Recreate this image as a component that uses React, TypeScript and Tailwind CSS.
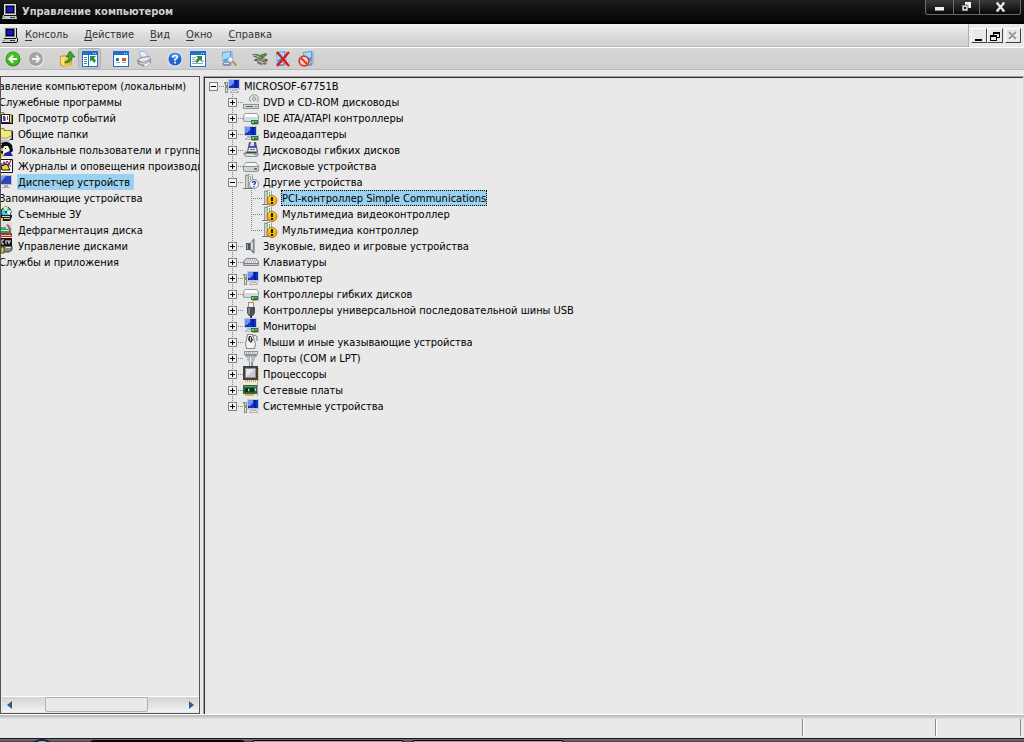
import React, { useState } from 'react';

type IconProps = { children: React.ReactNode; size?: number };

const Svg = ({ children, size = 16 }: IconProps) => (
  <svg width={size} height={size} viewBox="0 0 16 16" className="shrink-0" aria-hidden="true">
    {children}
  </svg>
);

/* ---------- shared drawing parts ---------- */

const Card = () => (
  <>
    <path d="M8 10h7v4H8z" fill="#1d7a41" />
    <path d="M9 11h2v2H9zM12 11h2v1h-2z" fill="#7fd09a" />
    <path d="M9 14h5v1H9z" fill="#d9a520" />
    <path d="M15 9h1v6h-1z" fill="#a7abb0" />
  </>
);

const Tower = () => (
  <>
    <path d="M2 1l4-1 4 1v13H2z" fill="#9a9d94" />
    <path d="M3 2h2v12H3z" fill="#c9ccc3" />
    <path d="M6 1h3v12H6z" fill="#f4f5f1" />
    <path d="M7 2h1v4H7z" fill="#5fc230" />
    <path d="M0 14h10v1H0z" fill="#777a72" />
  </>
);

/* ---------- tree icons ---------- */

const PcIcon = () => (
  <Svg>
    <path d="M4 1h12v11H4z" fill="#c6c9d4" />
    <path d="M5 2h10v8H5z" fill="#1230c4" />
    <path d="M5 2h5v3L7 8H5z" fill="#6a94f4" />
    <path d="M11 2h2v8h-2z" fill="#0a1b9a" />
    <path d="M8 12h5v1h2v2H6v-2h2z" fill="#b3b6bc" />
    <path d="M8 13h5v1H8z" fill="#e4e5e8" />
    <path d="M0 4h4v11H1v-9H0z" fill="#8b9087" />
    <path d="M2 5h1v9H2z" fill="#dfe2dc" />
    <path d="M2 7h1v3H2z" fill="#3fc41e" />
  </Svg>
);

const MonitorIcon = () => (
  <Svg>
    <path d="M1 0h13v10H1z" fill="#c6c9d4" />
    <path d="M2 1h11v8H2z" fill="#1230c4" />
    <path d="M2 1h5v3L4 7H2z" fill="#6a94f4" />
    <path d="M9 1h2v8H9z" fill="#0a1b9a" />
    <path d="M4 10h5v2h1v2H2v-2h2z" fill="#b3b6bc" />
    <path d="M4 12h5v1H4z" fill="#e4e5e8" />
    <Card />
  </Svg>
);

const ManagerIcon = () => (
  <Svg>
    <path d="M1 1h13v10H1z" fill="#b9bcc6" />
    <path d="M2 2h11v8H2z" fill="#2a44ba" />
    <path d="M2 2h6L2 9z" fill="#7f9ceb" />
    <path d="M6 11h4v2h2v1H4v-1h2z" fill="#a6a8ad" />
  </Svg>
);

const DvdIcon = () => (
  <Svg>
    <circle cx="11" cy="5" r="4.500" fill="#dfe5e6" stroke="#8f9594" />
    <path d="M11 5L8 1a5 5 0 015 0z" fill="#a9dca0" />
    <path d="M11 5l4 2a5 5 0 00.5-3z" fill="#b9c6ee" />
    <circle cx="11" cy="5" r="1.500" fill="#f7f7f7" stroke="#8d9496" />
    <path d="M2 8h12l2 3H0z" fill="#e3e4e4" />
    <path d="M0 10h16v5H0z" fill="#919396" />
    <path d="M1 11h14v3H1z" fill="#d3d5d6" />
    <path d="M3 12h7v1H3z" fill="#5a5c5f" />
    <path d="M12 12h2v1h-2z" fill="#50b83a" />
  </Svg>
);

const IdeIcon = () => (
  <Svg>
    <path d="M2 3h12l2 3v5l-2 1H2l-2-1V6z" fill="#9b9da1" />
    <path d="M2 4h12l1 3H1z" fill="#fbfbfb" />
    <path d="M1 7h14v3l-1 1H2l-1-1z" fill="#d9dade" />
    <Card />
  </Svg>
);

const DiskIcon = () => (
  <Svg>
    <path d="M3 4h10l3 4v5l-2 1H2l-2-1V8z" fill="#919498" />
    <path d="M3 5h10l2 3H1z" fill="#f6f6f7" />
    <path d="M1 9h14v3l-1 1H2l-1-1z" fill="#d2d4d6" />
    <path d="M11 10h3v2h-3z" fill="#35a52c" />
  </Svg>
);

const FloppyIcon = () => (
  <Svg>
    <path d="M6 0h7l2 10H4z" fill="#4d5598" />
    <path d="M8 0h3v4H7z" fill="#dadff0" />
    <path d="M6 6h7l1 4H5z" fill="#eceef5" />
    <path d="M7 7h5v1H7z" fill="#5c63a8" />
    <path d="M3 9h11l2 3-2 3H3l-3-3z" fill="#8e9195" />
    <path d="M4 10h9l1 1H3z" fill="#3f4246" />
    <path d="M2 12h12l-1 2H3z" fill="#dcdee0" />
    <path d="M11 12h2v1h-2z" fill="#50b83a" />
  </Svg>
);

const OtherIcon = () => (
  <Svg>
    <Tower />
    <circle cx="11" cy="10" r="4.500" fill="#f4f7fc" stroke="#7f8ba0" />
    <path d="M9.500 9q0-1.500 1.500-1.500t1.500 1.300Q12.500 9.700 11 10.600V11" fill="none" stroke="#1d45b5" strokeWidth="1.300" />
    <path d="M10.300 12h1.400v1.200h-1.400z" fill="#1d45b5" />
  </Svg>
);

const WarningIcon = () => (
  <Svg>
    <Tower />
    <circle cx="10" cy="10.500" r="5" fill="#f2b40c" stroke="#946806" strokeWidth=".8" />
    <path d="M6.500 9q1-2.500 3.500-2.500T13.500 9" fill="none" stroke="#fbdc77" />
    <path d="M9 7h2v4H9zM9 12h2v2H9z" fill="#1c1503" />
  </Svg>
);

const SpeakerIcon = () => (
  <Svg>
    <path d="M3 5h4v7H3z" fill="#4d555d" />
    <path d="M4 6h1v5H4z" fill="#a1a8af" />
    <path d="M7 5l4-5v16l-4-4z" fill="#7c838b" />
    <path d="M8 5l2-2v10l-2-2z" fill="#dadee2" />
    <path d="M11 1h1v14h-1z" fill="#a5abb1" />
  </Svg>
);

const KeyboardIcon = () => (
  <Svg>
    <path d="M3 4h10l3 4v3l-1 1H1l-1-1V8z" fill="#7e818c" />
    <path d="M3 5h10l2 4H1z" fill="#eceef2" />
    <path d="M3 6h11M2 8h12" stroke="#8e93a3" strokeDasharray="1 1" />
    <path d="M4 7h11" stroke="#a8acb9" strokeDasharray="1 1" />
    <path d="M1 10h14v1H1z" fill="#c9cbd2" />
  </Svg>
);

const UsbIcon = () => (
  <Svg>
    <path d="M5 0h6v5H5z" fill="#8d9093" />
    <path d="M6 1h4v4H6z" fill="#f0f0f0" />
    <path d="M4 5h8v6l-2 3H6l-2-3z" fill="#4e5053" />
    <path d="M5 6h2v6H5z" fill="#85888b" />
    <path d="M7 14h2v2H7z" fill="#37393b" />
  </Svg>
);

const MouseIcon = () => (
  <Svg>
    <path d="M4 0h6l3 10-1 5H3l-1-5z" fill="#86898d" />
    <path d="M5 1h4l3 9-1 4H4l-1-4z" fill="#f2f2f3" />
    <path d="M6 2h2l2 4-2 3-3-3z" fill="#2c2e32" />
    <path d="M7 3h1v4H7z" fill="#d5d7da" />
    <path d="M10 2q3-2 4 1v4" fill="none" stroke="#77797e" />
  </Svg>
);

const PortIcon = () => (
  <Svg>
    <path d="M1 1h14v3l-2 3H3L1 4z" fill="#8b9399" />
    <path d="M2 2h12v2H2z" fill="#e1e5e8" />
    <path d="M3 3h10" stroke="#798087" strokeDasharray="1 1" />
    <path d="M4 6h8v4l-2 2H6l-2-2z" fill="#b5bcc1" />
    <path d="M6 12h4v4H6z" fill="#8b9297" />
    <path d="M7 7h1v9H7z" fill="#eef1f2" />
  </Svg>
);

const CpuIcon = () => (
  <Svg>
    <path d="M2 15h14V2" fill="none" stroke="#e0a22c" strokeWidth="2" strokeDasharray="1 1" />
    <path d="M0 0h15v14H0z" fill="#3f4143" />
    <path d="M2 2h11v10H2z" fill="#8b8e90" />
    <path d="M3 3h9v8H3z" fill="#c8cacb" />
    <path d="M3 3h9L3 11z" fill="#e6e7e7" />
  </Svg>
);

const NetIcon = () => (
  <Svg>
    <path d="M0 3h14v9H0z" fill="#28683a" />
    <path d="M1 4h12v1H1z" fill="#5b9c68" />
    <path d="M2 6h3v4H2zM7 6h4v4H7z" fill="#16301d" />
    <path d="M5 7h1v2H5zM12 6h1v3h-1z" fill="#b6d8b9" />
    <path d="M2 12h9v2H2z" fill="#e2b437" />
    <path d="M14 1h1v13h-1z" fill="#9da0a3" />
  </Svg>
);

/* ---------- console tree icons ---------- */

const Folder = () => (
  <>
    <path d="M1 2h5l1 2h7v9H1z" fill="#8a8a3c" />
    <path d="M1 3h4l1 2h7v7H1z" fill="#f2ea7c" />
    <path d="M2 13h12V5h1v9H2z" fill="#111" />
  </>
);

const EventsIcon = () => (
  <Svg>
    <Folder />
    <path d="M3.500 4.500h8v8h-8z" fill="#fff" stroke="#222" />
    <path d="M5 6h2v5H5z" fill="#2f46d0" />
    <path d="M9 6h1v4H9z" fill="#d42424" />
    <path d="M7 7h1v4H7z" fill="#888" />
  </Svg>
);

const SharedIcon = () => (
  <Svg>
    <Folder />
    <path d="M2 12h7l3-2 2 1-3 4H2z" fill="#d8dada" stroke="#77797a" strokeWidth=".6" />
  </Svg>
);

const UsersIcon = () => (
  <Svg>
    <path d="M3 1q7-3 11 2l1 6-3 2-6-4z" fill="#0b0b0b" />
    <path d="M6 4l4 0 2 4-2 3H7L5 8z" fill="#f7f4ef" />
    <path d="M7 6h1v1H7z" fill="#111" />
    <path d="M2 3h3v9H2z" fill="#161616" />
    <path d="M3 6h2v3H3z" fill="#d9b36a" />
    <path d="M7 11l5-2 3 5H5z" fill="#1626a8" />
    <path d="M2 11l4 1v3H2z" fill="#d8cf2e" />
  </Svg>
);

const LogsIcon = () => (
  <Svg>
    <path d="M1.500 1.500h13v13h-13z" fill="#fff" stroke="#111" />
    <path d="M3 11l3-7 3 6 4-8" fill="none" stroke="#d42020" strokeWidth="1.300" />
    <path d="M3 5l3 5 3-7 4 6" fill="none" stroke="#2233c0" />
    <path d="M3 8l6-2 3 6H4z" fill="#efd43b" stroke="#111" />
  </Svg>
);

const RemovableIcon = () => (
  <Svg>
    <circle cx="8" cy="6" r="5" fill="#3ecfe0" stroke="#111" />
    <path d="M8 6L5 1h5z" fill="#f2ef5a" />
    <path d="M8 6l5-2-1 5z" fill="#fff" />
    <circle cx="8" cy="6" r="1" fill="#111" />
    <path d="M2 9h12v2l-2 4H5l-3-3z" fill="#1b1b1b" />
    <path d="M4 10h8v1H4zM6 12h6v1H6z" fill="#d0d2d2" />
    <path d="M2 12h3v2H2z" fill="#efd43b" />
  </Svg>
);

const DefragIcon = () => (
  <Svg>
    <path d="M2 0h12v15H2z" fill="#e9dcc3" />
    <path d="M8 2l3 1 2 4h-2L9 4z" fill="#b23fc2" />
    <path d="M2 5h6v3H2z" fill="#2ab6a8" />
    <path d="M2 7h11v4H2z" fill="#27a04b" />
    <path d="M2 11h12v4H2z" fill="#b62b34" />
    <path d="M3 13h10v1H3z" fill="#f1c9a4" />
    <path d="M3 8h8v1H3z" fill="#cfeed2" />
  </Svg>
);

const DisksIcon = () => (
  <Svg>
    <path d="M2 0h12v8H2z" fill="#151515" />
    <path d="M6 2H4v4h2M8 2v4M10 2v2h2V2M11 4v2" fill="none" stroke="#f2f2f2" />
    <path d="M3 8h11v4l-3 2H3z" fill="#8b8d8e" stroke="#222" strokeWidth=".8" />
    <path d="M8 9h5v1H8z" fill="#e6e6e6" />
    <path d="M3 9h3v6H3z" fill="#efd43b" stroke="#111" strokeWidth=".7" />
  </Svg>
);

/* ---------- bars ---------- */

const ConsoleIcon = () => (
  <Svg>
    <path d="M2 0h12v11H2z" fill="#dcdcdc" />
    <path d="M14 1h1v10h-1z" fill="#111" />
    <path d="M3 1h10v9H3z" fill="#777" />
    <path d="M4 2h8v7H4z" fill="#000" />
    <path d="M5 3h6v5H5z" fill="#1414d8" />
    <path d="M1 11h13l1 4H0z" fill="#c9c9c9" />
    <path d="M0 15h15v1H0zM15 11h1v4h-1zM2 11h12v1H2z" fill="#111" />
    <path d="M1 13h2v1H1z" fill="#2fd22f" />
    <path d="M8 13h5v1H8z" fill="#333" />
  </Svg>
);

const BackIcon = () => (
  <Svg>
    <circle cx="8" cy="8" r="7.500" fill="#2f9e17" />
    <circle cx="8" cy="7.500" r="6.300" fill="#49c026" />
    <path d="M12 8H5M8 4.500L4.500 8 8 11.500" fill="none" stroke="#fff" strokeWidth="2" />
  </Svg>
);

const ForwardIcon = () => (
  <Svg>
    <circle cx="8.500" cy="8.500" r="7.500" fill="#f3f3f3" />
    <circle cx="8" cy="8" r="7" fill="#a2a2a2" />
    <path d="M4 8h7M8 4.500l3.500 3.500L8 11.500" fill="none" stroke="#f0f0f0" strokeWidth="2" />
  </Svg>
);

const UpIcon = () => (
  <Svg>
    <path d="M1 5l5-1 2 1 5-1v10l-8 2-4-2z" fill="#d79d22" />
    <path d="M2 6l8-1v9l-5 1-3-2z" fill="#fbe07d" />
    <path d="M5 8l8-1-1 7-7 2z" fill="#f4c64b" />
    <path d="M6 11q4-1 4-5H7l4-6 5 6h-3q0 6-7 6z" fill="#39a52b" stroke="#1c6e15" strokeWidth=".7" />
  </Svg>
);

const WindowFrame = () => (
  <>
    <path d="M0 0h16v16H0z" fill="#1e6fd0" />
    <path d="M1 4h14v11H1z" fill="#fff" />
    <path d="M11 2h1v1h-1zM13 2h1v1h-1z" fill="#cfe2fa" />
  </>
);

const TreeViewIcon = () => (
  <Svg>
    <WindowFrame />
    <path d="M2 6.500h3M2 8.500h3M2 10.500h3M2 12.500h3" stroke="#5d7896" />
    <path d="M6 4h1v11H6z" fill="#1e6fd0" />
    <path d="M8 5h6l-2 2 2 3-2 2-2-3-2 2z" fill="#23913a" />
  </Svg>
);

const PropsIcon = () => (
  <Svg>
    <WindowFrame />
    <path d="M3 7h3v3H3z" fill="#2c6fc9" />
    <path d="M9 7h4v3H9z" fill="#d4552d" />
    <path d="M3 11h4v1H3zM9 11h4v1H9z" fill="#9aa4af" />
  </Svg>
);

const ExportIcon = () => (
  <Svg>
    <WindowFrame />
    <path d="M2 6.500h4M2 8.500h3M2 10.500h3M2 12.500h11M12 10.500h2" stroke="#8ea3ba" />
    <path d="M6 5h6v6l-2-2-3 3-2-2 3-3z" fill="#2a9140" />
  </Svg>
);

const PrinterIcon = () => (
  <Svg>
    <path d="M3 1l6-1 3 6-6 2z" fill="#e3efff" stroke="#86a9dc" strokeWidth=".8" />
    <path d="M1 9l4-3 8-1 2 3v4l-7 4-6-3z" fill="#8c8f95" />
    <path d="M2 9l4-2 7-1 1 2-7 3z" fill="#e8e9eb" />
    <path d="M3 11l4 1 7-3v1l-7 4-4-2z" fill="#d0d2d6" />
    <path d="M7 14l6-3 2 1-6 4z" fill="#fff" stroke="#83868b" strokeWidth=".5" />
  </Svg>
);

const HelpIcon = () => (
  <Svg>
    <circle cx="8" cy="8" r="7.500" fill="#f1f5fc" />
    <circle cx="8" cy="8" r="6.600" fill="#2565c9" />
    <path d="M3 6q1.500-4 5-4t5 4q-5 3-10 0z" fill="#5b93e6" />
    <path d="M5.800 6.500q0-2 2.200-2t2.200 1.800Q10.200 7.500 8 8.500v1.200" fill="none" stroke="#fff" strokeWidth="1.600" />
    <path d="M7.200 10.800h1.700v1.600H7.200z" fill="#fff" />
  </Svg>
);

const BlueScreen = () => (
  <>
    <path d="M10 0l2 1v11l-3 1z" fill="#a9b4d2" />
    <path d="M1 1l9-1v10l-8 1z" fill="#4fa0e6" />
    <path d="M2 2l7-1v5L2 9z" fill="#a6dafb" />
    <path d="M3 11h5l3 2-2 2H3l-2-2z" fill="#8a8fb8" />
    <path d="M3 12h5v1H3z" fill="#e2e6f4" />
  </>
);

const ScanIcon = () => (
  <Svg>
    <BlueScreen />
    <circle cx="9.500" cy="8.500" r="2.700" fill="#e6f6ff" stroke="#8aa9c6" />
    <path d="M11.500 10.500l4 4" stroke="#c4905c" strokeWidth="2" />
  </Svg>
);

const DriverIcon = () => (
  <Svg>
    <path d="M0 3l5 0 3 1 6-2 1 2-4 3-4 0-5-1z" fill="#4f6b48" />
    <path d="M5 4l4 0 5-2 1 1-5 3z" fill="#3f9e38" />
    <path d="M1 4l4 1 4 2" fill="none" stroke="#c3cbbd" />
    <path d="M3 8l5-1 7 1 1 2-4 1-5-1-5 0z" fill="#55594f" />
    <path d="M5 9h8" stroke="#b9c0b2" />
    <path d="M5 10l3 1 3 2-2 1-4-2z" fill="#6f7568" />
    <path d="M10 12l4-1 1 2-3 1z" fill="#9a6a3c" />
  </Svg>
);

const RemoveIcon = () => (
  <Svg>
    <BlueScreen />
    <path d="M2 1l12 14M14 1L2 15" stroke="#dc1414" strokeWidth="2.200" />
  </Svg>
);

const DisableIcon = () => (
  <Svg>
    <g transform="translate(4 0)">
      <BlueScreen />
    </g>
    <circle cx="6" cy="10" r="4.800" fill="#f3d6d2" stroke="#d9371f" strokeWidth="1.800" />
    <path d="M3 7l6 6" stroke="#d9371f" strokeWidth="1.800" />
  </Svg>
);

/* ---------- data ---------- */

const menus = ['Консоль', 'Действие', 'Вид', 'Окно', 'Справка'];

const toolGroups = [
  [
    { label: 'Назад', Icon: BackIcon },
    { label: 'Вперед', Icon: ForwardIcon },
  ],
  [
    { label: 'Вверх', Icon: UpIcon },
    { label: 'Дерево консоли', Icon: TreeViewIcon, pressed: true },
  ],
  [
    { label: 'Свойства', Icon: PropsIcon },
    { label: 'Печать', Icon: PrinterIcon },
  ],
  [
    { label: 'Помощь', Icon: HelpIcon },
    { label: 'Экспорт', Icon: ExportIcon },
  ],
  [{ label: 'Обновить конфигурацию', Icon: ScanIcon }],
  [
    { label: 'Обновить драйвер', Icon: DriverIcon },
    { label: 'Удалить', Icon: RemoveIcon },
    { label: 'Отключить', Icon: DisableIcon },
  ],
];

const consoleTree = [
  { level: 0, text: 'Управление компьютером (локальным)', Icon: ConsoleIcon },
  { level: 1, text: 'Служебные программы', Icon: ConsoleIcon },
  { level: 2, text: 'Просмотр событий', Icon: EventsIcon },
  { level: 2, text: 'Общие папки', Icon: SharedIcon },
  { level: 2, text: 'Локальные пользователи и группы', Icon: UsersIcon },
  { level: 2, text: 'Журналы и оповещения производительности', Icon: LogsIcon },
  { level: 2, text: 'Диспетчер устройств', Icon: ManagerIcon },
  { level: 1, text: 'Запоминающие устройства', Icon: ConsoleIcon },
  { level: 2, text: 'Съемные ЗУ', Icon: RemovableIcon },
  { level: 2, text: 'Дефрагментация диска', Icon: DefragIcon },
  { level: 2, text: 'Управление дисками', Icon: DisksIcon },
  { level: 1, text: 'Службы и приложения', Icon: ConsoleIcon },
];

const devices = [
  { text: 'DVD и CD-ROM дисководы', Icon: DvdIcon },
  { text: 'IDE ATA/ATAPI контроллеры', Icon: IdeIcon },
  { text: 'Видеоадаптеры', Icon: MonitorIcon },
  { text: 'Дисководы гибких дисков', Icon: FloppyIcon },
  { text: 'Дисковые устройства', Icon: DiskIcon },
  {
    text: 'Другие устройства',
    Icon: OtherIcon,
    items: ['PCI-контроллер Simple Communications', 'Мультимедиа видеоконтроллер', 'Мультимедиа контроллер'],
  },
  { text: 'Звуковые, видео и игровые устройства', Icon: SpeakerIcon },
  { text: 'Клавиатуры', Icon: KeyboardIcon },
  { text: 'Компьютер', Icon: PcIcon },
  { text: 'Контроллеры гибких дисков', Icon: IdeIcon },
  { text: 'Контроллеры универсальной последовательной шины USB', Icon: UsbIcon },
  { text: 'Мониторы', Icon: MonitorIcon },
  { text: 'Мыши и иные указывающие устройства', Icon: MouseIcon },
  { text: 'Порты (COM и LPT)', Icon: PortIcon },
  { text: 'Процессоры', Icon: CpuIcon },
  { text: 'Сетевые платы', Icon: NetIcon },
  { text: 'Системные устройства', Icon: PcIcon },
];

/* ---------- tree pieces ---------- */

// Dotted connector of one tree level; box is the +/- sign
const Branch = ({ up = true, down = true, right = true, box }: { up?: boolean; down?: boolean; right?: boolean; box?: 'plus' | 'minus' }) => (
  <svg width="19" height="16" viewBox="0 0 19 16" shapeRendering="crispEdges" className="shrink-0" aria-hidden="true">
    {up && <path d="M8.500 0v8" stroke="#808080" strokeDasharray="1 1" />}
    {down && <path d="M8.500 8v8" stroke="#808080" strokeDasharray="1 1" />}
    {right && <path d="M8 8.500h11" stroke="#808080" strokeDasharray="1 1" />}
    {box && <rect x="4.500" y="4.500" width="8" height="8" fill="#f4f4f4" stroke="#808080" />}
    {box && <path d="M6 8.500h5" stroke="#000" />}
    {box === 'plus' && <path d="M8.500 6v5" stroke="#000" />}
  </svg>
);

const Label = ({ text, selected, onClick }: { text: string; selected: boolean; onClick: () => void }) => (
  <button
    onClick={onClick}
    className={`ml-[3px] h-4 px-px whitespace-nowrap leading-[18px] ${selected ? 'bg-[#99d1ee] outline-1 -outline-offset-1 outline-dotted outline-black' : ''}`}
  >
    {text}
  </button>
);

export default function App() {
  const [node, setNode] = useState('Диспетчер устройств');
  const [device, setDevice] = useState('PCI-контроллер Simple Communications');
  const [open, setOpen] = useState<Record<string, boolean>>({ 'Другие устройства': true });

  return (
    <div className="flex h-screen flex-col overflow-hidden bg-[#e9e9e9] font-['DejaVu_Sans_Condensed','DejaVu_Sans',sans-serif] text-[11px] text-black">
      {/* Title bar */}
      <header className="flex h-6 shrink-0 justify-between border-b-2 border-black bg-linear-to-b from-[#1c1c1c] to-[#060606]">
        <div className="flex items-center gap-1 pt-0.5 pl-0.5">
          <ConsoleIcon />
          <h1 className="font-bold leading-[18px] text-[#d0d0d0]">Управление компьютером</h1>
        </div>
        <div className="mr-[3px] flex h-[15px] divide-x divide-[#6a6a6a] rounded-b-[3px] border border-t-0 border-[#6a6a6a] bg-linear-to-b from-[#3a3a3a] to-[#090909]">
          <button aria-label="Свернуть" className="flex w-7 items-center justify-center">
            <svg width="11" height="12" viewBox="0 0 11 12"><path d="M1 6h9v4H1z" fill="#8a8a8a" /><path d="M1 6h9v3H1z" fill="#f0f0f0" /></svg>
          </button>
          <button aria-label="Развернуть" className="flex w-[26px] items-center justify-center">
            <svg width="11" height="12" viewBox="0 0 11 12"><path d="M4 1h6v6H4z" fill="#f2f2f2" /><path d="M1 4h6v6H1z" fill="#cfcfcf" stroke="#333" strokeWidth=".6" /><path d="M3 6h2v2H3z" fill="#222" /></svg>
          </button>
          <button aria-label="Закрыть" className="flex w-10 items-center justify-center">
            <svg width="11" height="12" viewBox="0 0 11 12"><path d="M2 2l7 8M9 2l-7 8" stroke="#e8e8e8" strokeWidth="2.400" /><path d="M1 2h3M7 2h3M1 10h3M7 10h3" stroke="#e8e8e8" /></svg>
          </button>
        </div>
      </header>

      {/* Menu bar */}
      <div className="flex h-6 shrink-0 border-b border-white bg-linear-to-b from-[#f2f2f2] via-[#dcdcdc] to-[#cfcfcf]">
        <nav className="flex flex-1 items-center border-b border-[#b9b9b9] pl-0.5 text-[#333]">
          <ConsoleIcon />
          {menus.map((m) => (
            <button key={m} className="px-2 leading-[18px] first-of-type:pl-[7px]">
              <span className="underline underline-offset-2">{m[0]}</span>
              {m.slice(1)}
            </button>
          ))}
        </nav>
        <div className="flex items-center border-l border-[#b0b0b0] bg-[#e9e9e9] pr-[3px] pl-0.5">
          <button aria-label="Свернуть окно" className="flex h-[15px] w-4 items-center justify-center border border-t-white border-r-[#444] border-b-[#444] border-l-white">
            <svg width="12" height="12" viewBox="0 0 12 12"><path d="M2 9h7v2H2z" /></svg>
          </button>
          <button aria-label="Восстановить окно" className="flex h-[15px] w-4 items-center justify-center border border-t-white border-r-[#444] border-b-[#444] border-l-white">
            <svg width="12" height="12" viewBox="0 0 12 12" shapeRendering="crispEdges"><path d="M4 2h7v2H4zM10 4h1v4h-1zM8 7h2v1H8zM4 4h1v1H4z" /><path d="M1 5h7v6H1zM2 7v3h5V7z" fillRule="evenodd" /></svg>
          </button>
          <button aria-label="Закрыть окно" className="ml-0.5 flex h-[15px] w-4 items-center justify-center border border-t-white border-r-[#444] border-b-[#444] border-l-white">
            <svg width="12" height="12" viewBox="0 0 12 12"><path d="M3 3l7 7M10 3l-7 7" stroke="#fff" strokeWidth="2" /><path d="M2 2l7 7M9 2L2 9" stroke="#9a9a9a" strokeWidth="2" /></svg>
          </button>
        </div>
      </div>

      {/* Toolbar */}
      <div className="flex h-[22px] shrink-0 items-center gap-2 border-b border-[#bababa] bg-linear-to-b from-[#d6d6d6] to-[#cfcfcf] pl-px">
        {toolGroups.map((group, i) => (
          <div key={i} className="flex">
            {group.map(({ label, Icon, ...rest }) => (
              <button
                key={label}
                aria-label={label}
                className={`flex h-[21px] w-[23px] items-center justify-center ${'pressed' in rest ? 'rounded-[3px] border border-[#b3b3b3] bg-[#c6c6c6]' : ''}`}
              >
                <Icon />
              </button>
            ))}
          </div>
        ))}
      </div>

      <main className="flex min-h-0 flex-1 gap-[3px] pt-1.5">
        {/* Console tree, scrolled to the right */}
        <aside className="flex w-[200px] shrink-0 flex-col overflow-hidden border border-[#555]">
          <ul className="-ml-[41px] flex-1 pt-px">
            {consoleTree.map(({ level, text, Icon }) => (
              <li key={text} className="flex h-4">
                {level > 0 && <span className="w-[19px] shrink-0" />}
                {level > 1 && <span className="w-[19px] shrink-0" />}
                <Icon />
                <button
                  onClick={() => setNode(text)}
                  className={`ml-[3px] h-4 pr-1 pl-px whitespace-nowrap leading-[18px] ${node === text ? 'bg-[#99d1ee]' : ''}`}
                >
                  {text}
                </button>
              </li>
            ))}
          </ul>
          <div className="mx-px mb-px flex h-4 items-center justify-between border-t border-white bg-linear-to-b from-[#d4d4d4] to-[#f2f2f2]">
            <button aria-label="Прокрутить влево" className="flex w-3.5 justify-center">
              <svg width="5" height="8" viewBox="0 0 5 8"><path d="M5 0v8L0 4z" fill="#2b5f91" /></svg>
            </button>
            <div className="flex flex-1">
              <button aria-label="Полоса прокрутки" className="ml-[29px] h-[15px] w-[103px] rounded-[2px] border border-[#b0b0b0] bg-[#e9e9e9]" />
            </div>
            <button aria-label="Прокрутить вправо" className="flex w-3.5 justify-center">
              <svg width="5" height="8" viewBox="0 0 5 8"><path d="M0 0v8l5-4z" fill="#2b5f91" /></svg>
            </button>
          </div>
        </aside>

        {/* Device tree */}
        <section className="flex-1 border-t border-r border-l border-t-[#a0a0a0] border-r-[#dcdcdc] border-l-[#a0a0a0]">
          <div className="h-full overflow-hidden border-t border-l border-[#333]">
            <div className="flex h-4">
              <button aria-label="Свернуть">
                <Branch up={false} down={false} box="minus" />
              </button>
              <PcIcon />
              <Label text="MICROSOF-67751B" selected={false} onClick={() => setDevice('')} />
            </div>
            <ul>
              {devices.map(({ text, Icon, items }, i) => {
                const last = i === devices.length - 1;
                const expanded = !!items && !!open[text];
                return (
                  <li key={text}>
                    <div className="flex h-4 pl-[19px]">
                      <button aria-label={text} onClick={() => setOpen({ ...open, [text]: !open[text] })}>
                        <Branch down={!last} box={expanded ? 'minus' : 'plus'} />
                      </button>
                      <Icon />
                      <Label text={text} selected={device === text} onClick={() => setDevice(text)} />
                    </div>
                    {expanded &&
                      items.map((item, j) => (
                        <div key={item} className="flex h-4 pl-[19px]">
                          <Branch right={false} />
                          <Branch down={j < items.length - 1} />
                          <WarningIcon />
                          <Label text={item} selected={device === item} onClick={() => setDevice(item)} />
                        </div>
                      ))}
                  </li>
                );
              })}
            </ul>
          </div>
        </section>
      </main>

      {/* Status bar */}
      <footer className="flex h-6 shrink-0 border-t border-white bg-linear-to-b from-[#b4b4b4] via-[#e9e9e9] via-20% to-[#e9e9e9] pt-1 pr-[3px] pb-0.5">
        <div className="flex-1 border-r border-[#8c8c8c]" />
        <div className="w-[133px] border-r border-l border-r-[#8c8c8c] border-l-white" />
        <div className="w-[85px] border-r border-l border-r-[#8c8c8c] border-l-white" />
      </footer>

      {/* Top edge of the taskbar */}
      <div className="flex h-1 shrink-0 gap-1.5 overflow-hidden border-t border-[#1a1a1a] bg-linear-to-b from-[#7a7a7a] to-[#444] pl-7">
        <span className="h-7 w-7 shrink-0 rounded-full border-2 border-[#0c2438] bg-[#8fc4e6]" />
        <span className="mt-px ml-7 h-3 w-[155px] shrink-0 rounded-sm bg-black" />
        <span className="mt-px h-3 w-[154px] shrink-0 rounded-sm border border-black bg-[#a8a8a8]" />
        <span className="mt-px h-3 w-[154px] shrink-0 rounded-sm border border-black bg-[#a8a8a8]" />
      </div>
    </div>
  );
}
